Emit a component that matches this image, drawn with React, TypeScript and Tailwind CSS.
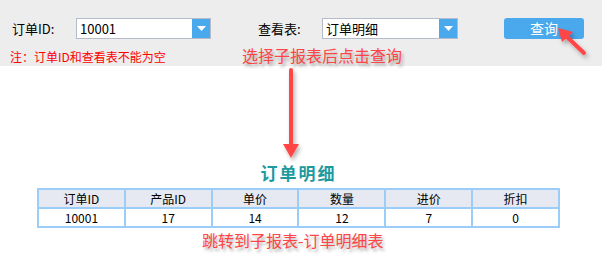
import React from 'react';

const headers = ['订单ID', '产品ID', '单价', '数量', '进价', '折扣'];
const row = ['10001', '17', '14', '12', '7', '0'];

function Combo({ value, width }: { value: string; width: string }) {
  return (
    <div className={`flex h-[21px] ${width} border border-[#b4bccc] bg-white`}>
      <div className="flex-1 pl-[3px] text-[13px] leading-[19px] text-black">{value}</div>
      <div className="flex w-[18px] items-center justify-center bg-[#4aa8ec]">
        <svg width="9" height="5" viewBox="0 0 9 5">
          <path d="M0 0 L9 0 L4.5 5 Z" fill="#fff" />
        </svg>
      </div>
    </div>
  );
}

export default function App() {
  return (
    <div
      className="relative h-[260px] w-[602px] overflow-hidden bg-white"
      style={{ fontFamily: '"Noto Sans CJK SC", "Liberation Sans", sans-serif' }}
    >
      {/* 查询条件栏 */}
      <div className="h-[66px] bg-[#ededed] pl-[12px] pt-[18px]">
        <div className="flex h-[21px] items-center">
          <span className="w-[64px] text-[13px] text-black">订单ID:</span>
          <Combo value="10001" width="w-[135px]" />
          <span className="ml-[47px] w-[64px] text-[13px] text-black">查看表:</span>
          <Combo value="订单明细" width="w-[136px]" />
          <button className="ml-[46px] h-[21px] w-[80px] rounded-[3px] bg-[#4aa8ec] text-[14px] leading-[21px] text-white">
            查询
          </button>
        </div>
        <div className="mt-[10px] pl-[-2px] text-[12px] leading-[16px] text-[#ff0000] -ml-[2px]">
          注：订单ID和查看表不能为空
        </div>
      </div>

      {/* 子报表 */}
      <div className="pl-[37px] pt-[97px]">
        <div className="w-[523px] text-center text-[17px] font-bold leading-[20px] tracking-[2px] text-[#1d9a9e]" style={{ fontFamily: '"Noto Sans CJK SC", serif' }}>
          订单明细
        </div>
        <table className="mt-[5px] w-[523px] table-fixed border-collapse text-[12px] text-black">
          <thead>
            <tr className="h-[19px] bg-[#e6e9f1]">
              {headers.map(h => (
                <th key={h} className="border-2 border-[#9cccf8] p-0 text-center font-normal leading-[15px]">
                  {h}
                </th>
              ))}
            </tr>
          </thead>
          <tbody>
            <tr className="h-[19px] bg-white">
              {row.map((v, i) => (
                <td key={i} className="border-2 border-[#9cccf8] p-0 text-center leading-[15px]">
                  {v}
                </td>
              ))}
            </tr>
          </tbody>
        </table>
      </div>

      {/* 标注 */}
      <div className="absolute left-[242px] top-[45px] text-[16px] leading-[20px] text-[#ff4545] [text-shadow:2px_3px_3px_rgba(0,0,0,0.3)]">
        选择子报表后点击查询
      </div>
      <div className="absolute left-[202px] top-[230px] text-[16px] leading-[20px] text-[#ff4545] [text-shadow:2px_3px_3px_rgba(0,0,0,0.3)]">
        跳转到子报表-订单明细表
      </div>

      <svg className="absolute left-0 top-0" width="602" height="260" viewBox="0 0 602 260">
        <defs>
          <filter id="sh" x="-50%" y="-50%" width="200%" height="200%">
            <feDropShadow dx="2" dy="3" stdDeviation="2" floodColor="#000" floodOpacity="0.3" />
          </filter>
        </defs>
        <g filter="url(#sh)" fill="#ff4545" stroke="#ff4545">
          <line x1="291" y1="70" x2="291" y2="146" strokeWidth="4" strokeLinecap="round" />
          <path d="M283 144 L299 144 L291 158 Z" stroke="none" />
          <line x1="584" y1="53" x2="566" y2="36" strokeWidth="4" strokeLinecap="round" />
          <path d="M558 28 L573 32 L562 42 Z" stroke="none" />
        </g>
      </svg>
    </div>
  );
}
